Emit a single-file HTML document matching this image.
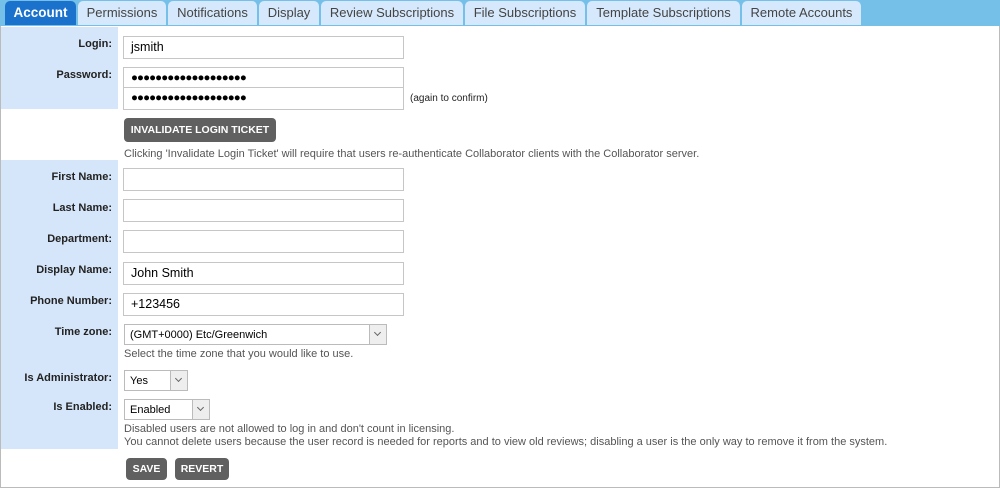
<!DOCTYPE html><html><head><style>
body{margin:0;width:1000px;height:489px;position:relative;font-family:"Liberation Sans",Arial,sans-serif;background:#fff;overflow:hidden}
.a{position:absolute}
#bar{left:0;top:0;width:1000px;height:26px;background:#74c0e8}
.t{position:absolute;top:1px;height:24px;background:#d6e8fb;border-radius:5px 5px 0 0;font-size:13px;color:#444;text-align:center;line-height:23px}
.t.on{background:#1a72cc;color:#fff;font-weight:bold;font-size:13.5px}
#box{left:0;top:26px;width:998px;height:461px;border:1px solid #bbb;border-top:none}
.lc{left:1px;width:117px;background:#d6e6fa}
.l{position:absolute;right:888px;font-size:11px;font-weight:bold;color:#222;text-align:right;white-space:nowrap}
.in{position:absolute;left:123px;border:1px solid #c6c6c6;background:#fff;font-size:12.5px;line-height:21px;padding-left:7px;box-sizing:border-box;width:281px;height:23px}
.h{position:absolute;left:124px;font-size:11px;color:#555;white-space:nowrap}
.btn{position:absolute;background:#5f605f;color:#fff;font-weight:bold;font-size:10.5px;border-radius:4px;text-align:center}
.sel{position:absolute;left:124px;border:1px solid #bbb;background:#fff;font-size:11px;line-height:20px;padding-left:5px;box-sizing:border-box;height:21px}
.sel i{position:absolute;right:0;top:0;width:16px;height:19px;border-left:1px solid #bbb;background:#eee}
.sel i:after{content:"";position:absolute;left:5px;top:5px;width:4px;height:4px;border-right:1px solid #666;border-bottom:1px solid #666;transform:rotate(45deg)}
.dots{font-size:11.5px;letter-spacing:-0.9px;color:#000}
</style></head><body>
<div class="a" id="bar"></div>
<div class="t on" style="left:5px;width:71px">Account</div>
<div class="t" style="left:78px;width:88px">Permissions</div>
<div class="t" style="left:168px;width:89px">Notifications</div>
<div class="t" style="left:259px;width:60px">Display</div>
<div class="t" style="left:321px;width:142px">Review Subscriptions</div>
<div class="t" style="left:465px;width:120px">File Subscriptions</div>
<div class="t" style="left:587px;width:153px">Template Subscriptions</div>
<div class="t" style="left:742px;width:119px">Remote Accounts</div>
<div class="a" id="box"></div>
<div class="a lc" style="top:27px;height:82px"></div>
<div class="a lc" style="top:160px;height:289px"></div>
<div class="l" style="top:38px">Login:</div>
<div class="in" style="top:36px">jsmith</div>
<div class="l" style="top:69px">Password:</div>
<div class="in dots" style="top:67px">●●●●●●●●●●●●●●●●●●●</div>
<div class="in dots" style="top:87px">●●●●●●●●●●●●●●●●●●●</div>
<div class="a" style="left:410px;top:93px;font-size:10px;color:#222">(again to confirm)</div>
<div class="btn" style="left:124px;top:118px;width:152px;height:24px;line-height:24px">INVALIDATE LOGIN TICKET</div>
<div class="h" style="top:148px">Clicking 'Invalidate Login Ticket' will require that users re-authenticate Collaborator clients with the Collaborator server.</div>
<div class="l" style="top:171px">First Name:</div><div class="in" style="top:168px"></div>
<div class="l" style="top:202px">Last Name:</div><div class="in" style="top:199px"></div>
<div class="l" style="top:233px">Department:</div><div class="in" style="top:230px"></div>
<div class="l" style="top:264px">Display Name:</div><div class="in" style="top:262px">John Smith</div>
<div class="l" style="top:295px">Phone Number:</div><div class="in" style="top:293px">+123456</div>
<div class="l" style="top:326px">Time zone:</div>
<div class="sel" style="top:324px;width:263px">(GMT+0000) Etc/Greenwich<i></i></div>
<div class="h" style="top:348px">Select the time zone that you would like to use.</div>
<div class="l" style="top:372px">Is Administrator:</div>
<div class="sel" style="top:370px;width:64px">Yes<i></i></div>
<div class="l" style="top:401px">Is Enabled:</div>
<div class="sel" style="top:399px;width:86px">Enabled<i></i></div>
<div class="h" style="top:423px">Disabled users are not allowed to log in and don't count in licensing.</div>
<div class="h" style="top:436px">You cannot delete users because the user record is needed for reports and to view old reviews; disabling a user is the only way to remove it from the system.</div>
<div class="btn" style="left:126px;top:458px;width:41px;height:22px;line-height:22px">SAVE</div>
<div class="btn" style="left:175px;top:458px;width:54px;height:22px;line-height:22px">REVERT</div>
</body></html>
